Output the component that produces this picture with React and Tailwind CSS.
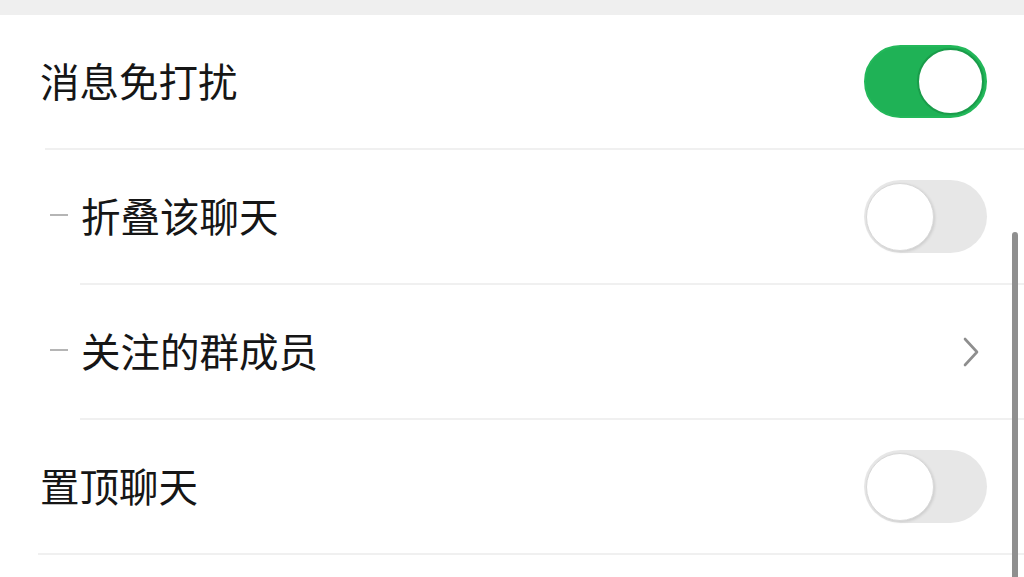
import React from "react";

const font = { fontFamily: '"Noto Sans CJK SC", "Noto Sans", sans-serif' };

function Toggle({ on }) {
  return on ? (
    <div className="w-[123px] h-[73px] rounded-full bg-[#1fb256] border-[2px] border-[#23b85a] flex items-center justify-end pr-[1px]">
      <div className="w-[67px] h-[67px] rounded-full bg-white border-[2px] border-[#1a9c4a]" />
    </div>
  ) : (
    <div className="w-[123px] h-[73px] rounded-full bg-[#e7e7e7] flex items-center justify-start pl-[2px]">
      <div className="w-[68px] h-[68px] rounded-full bg-white border border-[#d9d9d9] shadow-[1px_1px_3px_rgba(0,0,0,0.12)]" />
    </div>
  );
}

function Chevron() {
  return (
    <svg width="18" height="32" viewBox="0 0 18 32" className="mr-[7px]">
      <path d="M3 3 L15 16 L3 29" fill="none" stroke="#8e8e8e" strokeWidth="2.6" strokeLinecap="round" strokeLinejoin="round" />
    </svg>
  );
}

function Row({ label, sub, right, sepLeft }) {
  return (
    <div className="relative">
      <div className="h-[133px] flex items-center justify-between pr-[37px]">
        <div className="flex items-center -mt-[3px]">
          {sub ? (
            <>
              <div className="ml-[50px] w-[18px] h-[2px] bg-[#b5b5b5]" />
              <span className="ml-[13px] text-[39.5px] leading-none text-[#161616]" style={font}>{label}</span>
            </>
          ) : (
            <span className="ml-[40px] text-[39.5px] leading-none text-[#161616]" style={font}>{label}</span>
          )}
        </div>
        {right}
      </div>
      <div className={`h-[2px] bg-[#f0f0f0] ${sepLeft}`} />
    </div>
  );
}

export default function App() {
  return (
    <div className="relative w-[1024px] h-[577px] bg-white overflow-hidden">
      <div className="h-[15px] bg-[#efefef]" />
      <Row label="消息免打扰" right={<Toggle on />} sepLeft="ml-[45px]" />
      <Row label="折叠该聊天" sub right={<Toggle />} sepLeft="ml-[80px]" />
      <Row label="关注的群成员" sub right={<Chevron />} sepLeft="ml-[80px]" />
      <Row label="置顶聊天" right={<Toggle />} sepLeft="ml-[38px]" />
      <div className="absolute right-[6px] top-[232px] bottom-0 w-[6px] rounded-t-full bg-[#8f8f8f]" />
    </div>
  );
}
